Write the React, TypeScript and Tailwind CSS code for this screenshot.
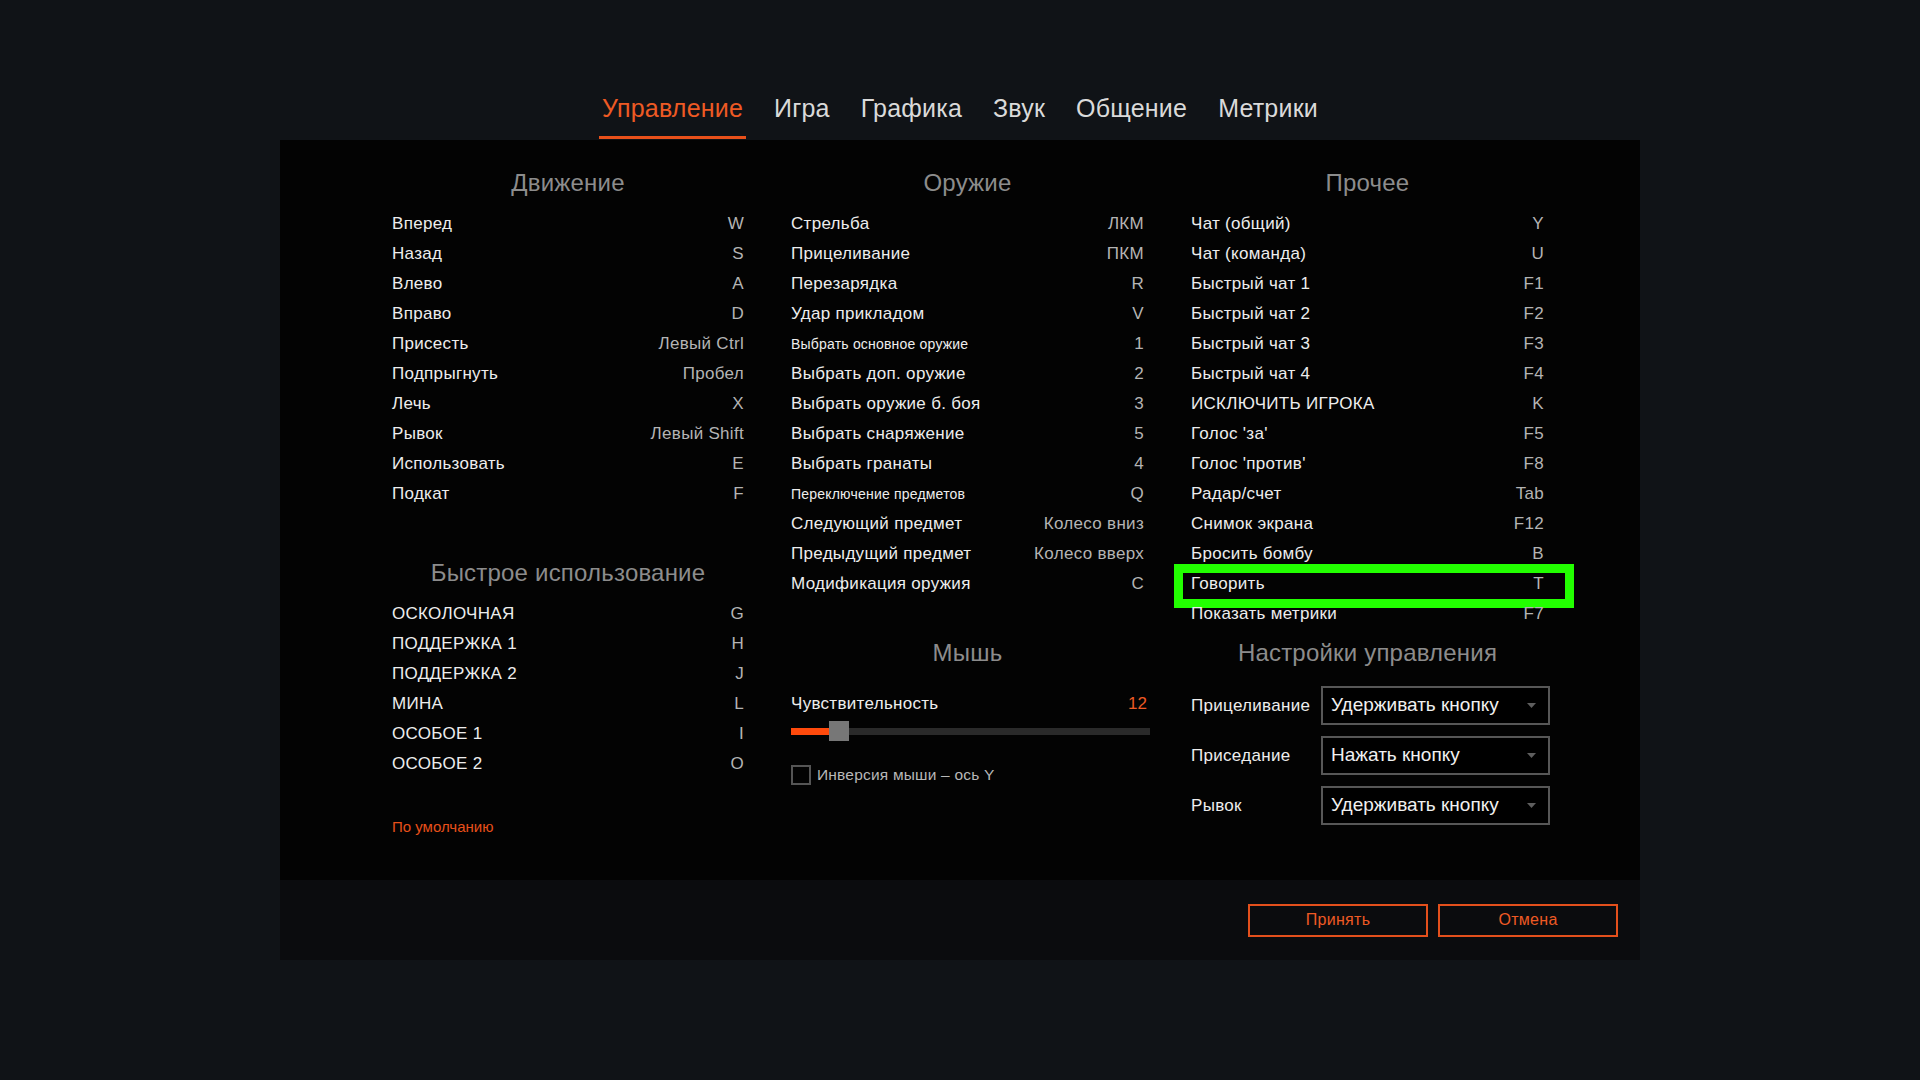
import React from "react";

const font = { fontFamily: '"Liberation Sans", Arial, sans-serif' };

type Bind = { label: string; key: string; small?: boolean; mark?: boolean };

const movement: Bind[] = [
  { label: "Вперед", key: "W" },
  { label: "Назад", key: "S" },
  { label: "Влево", key: "A" },
  { label: "Вправо", key: "D" },
  { label: "Присесть", key: "Левый Ctrl" },
  { label: "Подпрыгнуть", key: "Пробел" },
  { label: "Лечь", key: "X" },
  { label: "Рывок", key: "Левый Shift" },
  { label: "Использовать", key: "E" },
  { label: "Подкат", key: "F" },
];

const quick: Bind[] = [
  { label: "ОСКОЛОЧНАЯ", key: "G" },
  { label: "ПОДДЕРЖКА 1", key: "H" },
  { label: "ПОДДЕРЖКА 2", key: "J" },
  { label: "МИНА", key: "L" },
  { label: "ОСОБОЕ 1", key: "I" },
  { label: "ОСОБОЕ 2", key: "O" },
];

const weapons: Bind[] = [
  { label: "Стрельба", key: "ЛКМ" },
  { label: "Прицеливание", key: "ПКМ" },
  { label: "Перезарядка", key: "R" },
  { label: "Удар прикладом", key: "V" },
  { label: "Выбрать основное оружие", key: "1", small: true },
  { label: "Выбрать доп. оружие", key: "2" },
  { label: "Выбрать оружие б. боя", key: "3" },
  { label: "Выбрать снаряжение", key: "5" },
  { label: "Выбрать гранаты", key: "4" },
  { label: "Переключение предметов", key: "Q", small: true },
  { label: "Следующий предмет", key: "Колесо вниз" },
  { label: "Предыдущий предмет", key: "Колесо вверх" },
  { label: "Модификация оружия", key: "C" },
];

const other: Bind[] = [
  { label: "Чат (общий)", key: "Y" },
  { label: "Чат (команда)", key: "U" },
  { label: "Быстрый чат 1", key: "F1" },
  { label: "Быстрый чат 2", key: "F2" },
  { label: "Быстрый чат 3", key: "F3" },
  { label: "Быстрый чат 4", key: "F4" },
  { label: "ИСКЛЮЧИТЬ ИГРОКА", key: "K" },
  { label: "Голос 'за'", key: "F5" },
  { label: "Голос 'против'", key: "F8" },
  { label: "Радар/счет", key: "Tab" },
  { label: "Снимок экрана", key: "F12" },
  { label: "Бросить бомбу", key: "B" },
  { label: "Говорить", key: "T", mark: true },
  { label: "Показать метрики", key: "F7" },
];

function Heading({ children }: { children: React.ReactNode }) {
  return (
    <div className="h-[30px] text-center text-[24px] leading-[30px] tracking-[0.2px] text-[#8c8c8c]">
      {children}
    </div>
  );
}

function Row({ b }: { b: Bind }) {
  return (
    <div className="relative flex h-[30px] items-center justify-between">
      <span
        className={
          b.small
            ? "text-[14px] tracking-[0.2px] text-[#ededed]"
            : "text-[17px] tracking-[0.3px] text-[#ededed]"
        }
      >
        {b.label}
      </span>
      <span className="text-[17px] tracking-[0.3px] text-[#b4b4b4]">{b.key}</span>
      {b.mark && (
        <div className="absolute -left-[17px] -top-[5px] h-[44px] w-[400px] border-[9px] border-[#22ff00]" />
      )}
    </div>
  );
}

function Select({ value }: { value: string }) {
  return (
    <div className="flex h-[39px] w-[229px] shrink-0 items-center justify-between border-2 border-[#575757] bg-black pl-[8px] pr-[12px]">
      <span className="text-[19px] text-[#f0f0f0]">{value}</span>
      <svg width="9" height="5" viewBox="0 0 9 5">
        <path d="M0 0 H9 L4.5 5 Z" fill="#5e5e5e" />
      </svg>
    </div>
  );
}

export default function App() {
  return (
    <div className="min-h-screen w-full bg-[#101317]" style={font}>
      <div className="flex h-[140px] items-end justify-center">
        <div className="flex gap-[31px]">
          {["Управление", "Игра", "Графика", "Звук", "Общение", "Метрики"].map((t, i) => (
            <div key={t} className="flex flex-col items-center">
              <span
                className={
                  i === 0
                    ? "text-[25px] leading-[30px] tracking-[0.2px] text-[#ee5a24]"
                    : "text-[25px] leading-[30px] tracking-[0.2px] text-[#dadada]"
                }
              >
                {t}
              </span>
              <div
                className={
                  i === 0
                    ? "mt-[13px] mb-[1px] h-[3px] w-[calc(100%+6px)] bg-[#e8501a]"
                    : "mt-[13px] mb-[1px] h-[3px]"
                }
              />
            </div>
          ))}
        </div>
      </div>

      <div className="mx-auto w-[1360px]">
        <div className="flex h-[740px] gap-[47px] bg-[#030303] pl-[112px] pt-[28px]">
          {/* Движение */}
          <div className="flex w-[352px] flex-col">
            <Heading>Движение</Heading>
            <div className="mt-[11px]">
              {movement.map((b) => (
                <Row key={b.label} b={b} />
              ))}
            </div>
            <div className="mt-[49px]">
              <Heading>Быстрое использование</Heading>
            </div>
            <div className="mt-[11px]">
              {quick.map((b) => (
                <Row key={b.label} b={b} />
              ))}
            </div>
            <div className="mt-[33px] h-[30px] text-[15px] leading-[30px] text-[#e8501a]">
              По умолчанию
            </div>
          </div>

          {/* Оружие */}
          <div className="flex w-[353px] flex-col">
            <Heading>Оружие</Heading>
            <div className="mt-[11px]">
              {weapons.map((b) => (
                <Row key={b.label} b={b} />
              ))}
            </div>
            <div className="mt-[39px]">
              <Heading>Мышь</Heading>
            </div>
            <div className="mt-[21px] flex h-[30px] items-center justify-between">
              <span className="text-[17px] tracking-[0.3px] text-[#ededed]">Чувствительность</span>
              <span className="mr-[-3px] text-[17px] text-[#ee5a24]">12</span>
            </div>
            <div className="relative mt-[2px] flex h-[20px] w-[359px] items-center">
              <div className="h-[7px] w-full bg-[#2a2a2a]">
                <div className="h-full w-[40px] bg-[#ff4a0c]" />
              </div>
              <div className="absolute left-[38px] top-0 h-[20px] w-[20px] bg-[#777777]" />
            </div>
            <div className="mt-[22px] flex items-center gap-[6px]">
              <div className="h-[20px] w-[20px] border-2 border-[#555555]" />
              <span className="text-[15.5px] tracking-[0.2px] text-[#b8b8b8]">Инверсия мыши – ось Y</span>
            </div>
          </div>

          {/* Прочее */}
          <div className="flex w-[353px] flex-col">
            <Heading>Прочее</Heading>
            <div className="mt-[11px]">
              {other.map((b) => (
                <Row key={b.label} b={b} />
              ))}
            </div>
            <div className="mt-[9px]">
              <Heading>Настройки управления</Heading>
            </div>
            <div className="mt-[18px] flex flex-col gap-[11px]">
              {[
                ["Прицеливание", "Удерживать кнопку"],
                ["Приседание", "Нажать кнопку"],
                ["Рывок", "Удерживать кнопку"],
              ].map(([l, v]) => (
                <div key={l} className="flex items-center">
                  <span className="w-[130px] shrink-0 text-[17px] tracking-[0.3px] text-[#ededed]">{l}</span>
                  <Select value={v} />
                </div>
              ))}
            </div>
          </div>
        </div>

        <div className="flex h-[80px] items-center justify-end gap-[10px] bg-[#0b0c0e] pr-[22px]">
          {["Принять", "Отмена"].map((t) => (
            <button
              key={t}
              className="h-[33px] w-[180px] border-2 border-[#e4501c] text-[16px] tracking-[0.3px] text-[#ee5a24]"
            >
              {t}
            </button>
          ))}
        </div>
      </div>
    </div>
  );
}
